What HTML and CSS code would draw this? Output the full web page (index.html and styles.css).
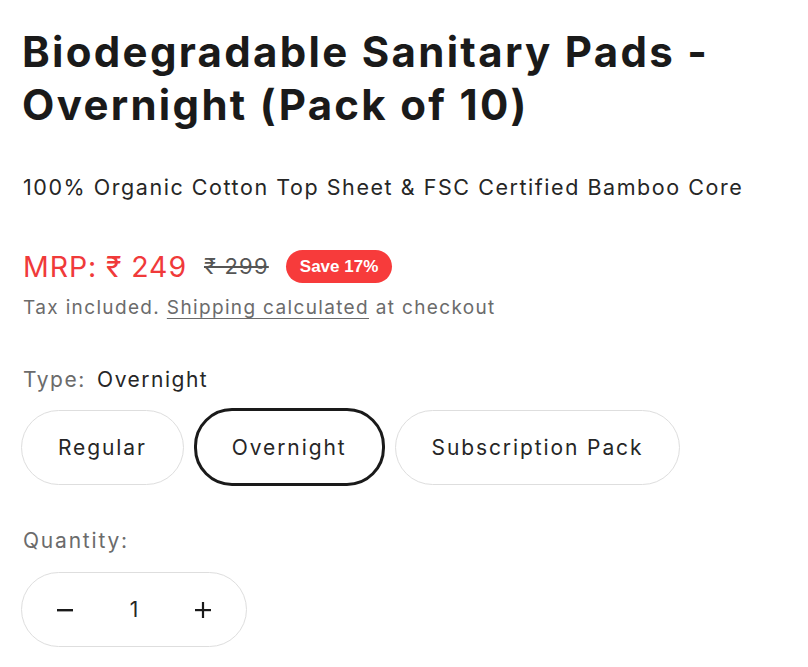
FILE: index.html
```html
<!DOCTYPE html>
<html lang="en">
<head>
<meta charset="utf-8">
<title>Biodegradable Sanitary Pads - Overnight</title>
<link rel="stylesheet" href="styles.css">
</head>
<body>
<main class="product">
  <h1 class="title">Biodegradable Sanitary Pads - Overnight (Pack of 10)</h1>
  <p class="subtitle">100% Organic Cotton Top Sheet &amp; FSC Certified Bamboo Core</p>
  <div class="price-row">
    <span class="price">MRP: ₹ 249</span>
    <s class="compare">₹ 299</s>
    <span class="badge">Save 17%</span>
  </div>
  <p class="tax">Tax included. <a class="link" href="#">Shipping calculated</a> at checkout</p>
  <p class="type-label"><span class="muted">Type:</span> Overnight</p>
  <div class="options">
    <button class="pill">Regular</button>
    <button class="pill active">Overnight</button>
    <button class="pill">Subscription Pack</button>
  </div>
  <p class="qty-label">Quantity:</p>
  <div class="qty">
    <button class="qty-btn" aria-label="Decrease">
      <svg width="18" height="18" viewBox="0 0 18 18"><rect x="1" y="8" width="16" height="2.4" fill="#1a1a1a"/></svg>
    </button>
    <span class="qty-val">1</span>
    <button class="qty-btn" aria-label="Increase">
      <svg width="18" height="18" viewBox="0 0 18 18"><rect x="1" y="8" width="16" height="2.2" fill="#1a1a1a"/><rect x="7.9" y="1" width="2.2" height="16" fill="#1a1a1a"/></svg>
    </button>
  </div>
</main>
</body>
</html>
```
FILE: styles.css
```css
* { box-sizing: border-box; }
body {
  margin: 0;
  background: #ffffff;
  font-family: "Inter", "Open Sans", sans-serif;
  color: #1f1f1f;
}
.product {
  padding: 25px 0 0 21px;
  display: flex;
  flex-direction: column;
  align-items: flex-start;
}
.title {
  margin: 0 0 0 1px;
  font-size: 42px;
  line-height: 53px;
  font-weight: 700;
  letter-spacing: 2.3px;
  color: #1a1a1a;
  max-width: 770px;
}
.subtitle {
  margin: 41px 0 0 2px;
  font-size: 21.5px;
  line-height: 30px;
  letter-spacing: 1.55px;
  color: #262626;
}
.price-row {
  margin: 47px 0 0 2px;
  display: flex;
  align-items: center;
  height: 34px;
}
.price {
  font-size: 28.5px;
  color: #f03a3a;
  letter-spacing: 0.9px;
}
.compare {
  margin-left: 17px;
  font-size: 22px;
  color: #555;
  letter-spacing: 1.2px;
}
.badge {
  margin-left: 17px;
  background: #f73b3b;
  color: #fff;
  font-family: "Liberation Sans", Arial, sans-serif;
  font-weight: 700;
  font-size: 17px;
  line-height: 33px;
  padding: 0 14px;
  border-radius: 17px;
}
.tax {
  margin: 12px 0 0 2px;
  font-size: 19px;
  line-height: 26px;
  letter-spacing: 1.35px;
  color: #6b6b6b;
}
.link {
  color: #6b6b6b;
  text-decoration: underline;
  text-underline-offset: 4px;
}
.type-label {
  margin: 46px 0 0 2px;
  font-size: 21px;
  line-height: 26px;
  letter-spacing: 1.5px;
  color: #262626;
}
.muted { color: #6b6b6b; margin-right: 4px; }
.options {
  margin-top: 15px;
  display: flex;
  gap: 10px;
  align-items: center;
}
.pill {
  font-family: inherit;
  font-size: 21px;
  letter-spacing: 1.9px;
  color: #262626;
  background: #fff;
  border: 1px solid #dedede;
  border-radius: 38px;
  height: 75px;
  padding: 0 36px;
}
.pill.active {
  border: 3px solid #1a1a1a;
  height: 78px;
  padding: 0 35px;
}
.qty-label {
  margin: 42px 0 0 2px;
  font-size: 21px;
  line-height: 26px;
  letter-spacing: 1.8px;
  color: #6b6b6b;
}
.qty {
  margin-top: 18px;
  width: 226px;
  height: 75px;
  flex: none;
  border: 1px solid #dedede;
  border-radius: 38px;
  display: flex;
  align-items: center;
  justify-content: space-between;
  padding: 0 26px;
}
.qty-btn {
  background: none;
  border: 0;
  padding: 0;
  width: 34px;
  height: 34px;
  display: flex;
  align-items: center;
  justify-content: center;
}
.qty-val {
  font-size: 21px;
  color: #262626;
}
```
